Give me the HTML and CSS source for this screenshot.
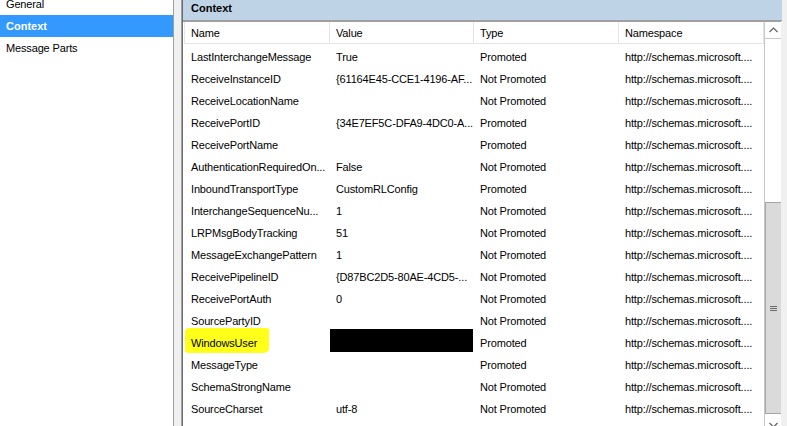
FILE: index.html
```html
<!DOCTYPE html>
<html>
<head>
<meta charset="utf-8">
<link rel="stylesheet" href="styles.css">
</head>
<body>
<div class="app">
  <aside class="nav">
    <div class="nav-item">General</div>
    <div class="nav-item selected">Context</div>
    <div class="nav-item">Message Parts</div>
  </aside>
  <div class="splitter"></div>
  <main class="pane">
    <div class="title">Context</div>
    <div class="list">
      <div class="list-main">
        <div class="hdr">
          <div class="hcell c-name">Name</div>
          <div class="hcell c-value">Value</div>
          <div class="hcell c-type">Type</div>
          <div class="hcell c-ns">Namespace</div>
        </div>
        <div class="rows">
          <div class="row"><div class="cell c-name">LastInterchangeMessage</div><div class="cell c-value">True</div><div class="cell c-type">Promoted</div><div class="cell c-ns">http://schemas.microsoft....</div></div>
          <div class="row"><div class="cell c-name">ReceiveInstanceID</div><div class="cell c-value">{61164E45-CCE1-4196-AF...</div><div class="cell c-type">Not Promoted</div><div class="cell c-ns">http://schemas.microsoft....</div></div>
          <div class="row"><div class="cell c-name">ReceiveLocationName</div><div class="cell c-value"></div><div class="cell c-type">Not Promoted</div><div class="cell c-ns">http://schemas.microsoft....</div></div>
          <div class="row"><div class="cell c-name">ReceivePortID</div><div class="cell c-value">{34E7EF5C-DFA9-4DC0-A...</div><div class="cell c-type">Promoted</div><div class="cell c-ns">http://schemas.microsoft....</div></div>
          <div class="row"><div class="cell c-name">ReceivePortName</div><div class="cell c-value"></div><div class="cell c-type">Promoted</div><div class="cell c-ns">http://schemas.microsoft....</div></div>
          <div class="row"><div class="cell c-name">AuthenticationRequiredOn...</div><div class="cell c-value">False</div><div class="cell c-type">Not Promoted</div><div class="cell c-ns">http://schemas.microsoft....</div></div>
          <div class="row"><div class="cell c-name">InboundTransportType</div><div class="cell c-value">CustomRLConfig</div><div class="cell c-type">Promoted</div><div class="cell c-ns">http://schemas.microsoft....</div></div>
          <div class="row"><div class="cell c-name">InterchangeSequenceNu...</div><div class="cell c-value">1</div><div class="cell c-type">Not Promoted</div><div class="cell c-ns">http://schemas.microsoft....</div></div>
          <div class="row"><div class="cell c-name">LRPMsgBodyTracking</div><div class="cell c-value">51</div><div class="cell c-type">Not Promoted</div><div class="cell c-ns">http://schemas.microsoft....</div></div>
          <div class="row"><div class="cell c-name">MessageExchangePattern</div><div class="cell c-value">1</div><div class="cell c-type">Not Promoted</div><div class="cell c-ns">http://schemas.microsoft....</div></div>
          <div class="row"><div class="cell c-name">ReceivePipelineID</div><div class="cell c-value">{D87BC2D5-80AE-4CD5-...</div><div class="cell c-type">Not Promoted</div><div class="cell c-ns">http://schemas.microsoft....</div></div>
          <div class="row"><div class="cell c-name">ReceivePortAuth</div><div class="cell c-value">0</div><div class="cell c-type">Not Promoted</div><div class="cell c-ns">http://schemas.microsoft....</div></div>
          <div class="row"><div class="cell c-name">SourcePartyID</div><div class="cell c-value"></div><div class="cell c-type">Not Promoted</div><div class="cell c-ns">http://schemas.microsoft....</div></div>
          <div class="row"><div class="cell c-name"><span class="marker"></span><span class="txt">WindowsUser</span></div><div class="cell c-value"><span class="redact"></span></div><div class="cell c-type">Promoted</div><div class="cell c-ns">http://schemas.microsoft....</div></div>
          <div class="row"><div class="cell c-name">MessageType</div><div class="cell c-value"></div><div class="cell c-type">Promoted</div><div class="cell c-ns">http://schemas.microsoft....</div></div>
          <div class="row"><div class="cell c-name">SchemaStrongName</div><div class="cell c-value"></div><div class="cell c-type">Not Promoted</div><div class="cell c-ns">http://schemas.microsoft....</div></div>
          <div class="row"><div class="cell c-name">SourceCharset</div><div class="cell c-value">utf-8</div><div class="cell c-type">Not Promoted</div><div class="cell c-ns">http://schemas.microsoft....</div></div>
        </div>
      </div>
      <div class="vscroll">
        <div class="sb-btn sb-up"><svg width="9" height="6" viewBox="0 0 9 6"><polyline points="0.5,5 4.5,1 8.5,5" fill="none" stroke="#606060" stroke-width="1.2"/></svg></div>
        <div class="sb-track">
          <div class="sb-thumb"><div class="grip"><i></i><i></i><i></i></div></div>
        </div>
        <div class="sb-btn sb-down"><svg width="9" height="6" viewBox="0 0 9 6"><polyline points="0.5,1 4.5,5 8.5,1" fill="none" stroke="#606060" stroke-width="1.2"/></svg></div>
      </div>
    </div>
  </main>
</div>
</body>
</html>
```
FILE: styles.css
```css
html, body {
  margin: 0;
  padding: 0;
  overflow: hidden;
  background: #f0f0f0;
}
body {
  font-family: "Liberation Sans", Arial, sans-serif;
  font-size: 11px;
  letter-spacing: -0.15px;
  color: #000;
}
.app {
  display: flex;
  width: 787px;
  height: 426px;
  overflow: hidden;
}
.nav {
  width: 173px;
  flex: none;
  background: #fff;
  border-right: 1px solid #a0a0a0;
}
.nav-item {
  height: 22px;
  line-height: 22px;
  padding-left: 6px;
  white-space: nowrap;
}
.nav-item:first-child {
  margin-top: -7px;
}
.nav-item.selected {
  background: #3399ff;
  color: #fff;
  font-weight: bold;
  letter-spacing: 0;
}
.nav-item.selected + .nav-item {
  line-height: 23px;
}
.splitter {
  width: 7px;
  flex: none;
  background: #f0f0f0;
}
.pane {
  flex: none;
  width: 600px;
  border-left: 1px solid #a0a0a0;
  box-shadow: inset 1px 0 0 #6d6d6d;
  padding-right: 5px;
  display: flex;
  flex-direction: column;
}
.title {
  flex: none;
  height: 20px;
  line-height: 17px;
  background: #bfd3e6;
  border-bottom: 1px solid #a0a0a0;
  font-weight: bold;
  letter-spacing: 0;
  padding-left: 8px;
  margin-left: 1px;
}
.list {
  flex: none;
  display: flex;
  height: 412px;
  background: #fff;
  border-right: 1px solid #a0a0a0;
  margin-left: 1px;
  margin-right: 1px;
}
.list-main {
  flex: none;
  width: 581px;
}
.hdr {
  display: grid;
  grid-template-columns: 147px 144px 145px 145px;
  height: 23px;
  border-top: 1px solid #a0a0a0;
  box-sizing: border-box;
}
.hcell {
  line-height: 23px;
  height: 21px;
  padding-left: 6px;
  border-right: 1px solid #e5e5e5;
  border-bottom: 1px solid #e5e5e5;
  white-space: nowrap;
  overflow: hidden;
}
.hcell.c-name {
  border-left: 1px solid #e5e5e5;
  margin-left: 1px;
}
.rows {
  padding-top: 2px;
}
.row {
  display: grid;
  grid-template-columns: 147px 144px 145px 145px;
  height: 22px;
}
.cell {
  position: relative;
  line-height: 22px;
  padding-left: 6px;
  white-space: nowrap;
}
.cell.c-name {
  padding-left: 8px;
}
.txt {
  position: relative;
}
.marker {
  position: absolute;
  left: 2px;
  top: -4px;
  width: 84px;
  height: 25px;
  background: #ffff1a;
  border-radius: 4px 2px 5px 3px;
}
.redact {
  position: absolute;
  left: 0;
  top: -3px;
  width: 143px;
  height: 23px;
  background: #000;
}
.vscroll {
  flex: none;
  width: 17px;
  display: flex;
  flex-direction: column;
  border-top: 1px solid #a0a0a0;
  border-left: 1px solid #c8c8c8;
  box-sizing: border-box;
  background: #fff;
}
.sb-btn {
  height: 16px;
  flex: none;
  display: flex;
  align-items: center;
  justify-content: center;
  background: #fff;
}
.sb-up {
  border-bottom: 1px solid #c8c8c8;
}
.sb-track {
  flex: 1;
  padding-top: 163px;
}
.sb-thumb {
  height: 212px;
  background: #dadada;
  border: 1px solid #a6a6a6;
  border-right: none;
  display: flex;
  align-items: center;
  justify-content: center;
  box-sizing: border-box;
  margin-bottom: 1px;
}
.grip {
  display: flex;
  flex-direction: column;
  gap: 1px;
}
.grip i {
  display: block;
  width: 7px;
  height: 1px;
  background: #6a6a6a;
}
```
